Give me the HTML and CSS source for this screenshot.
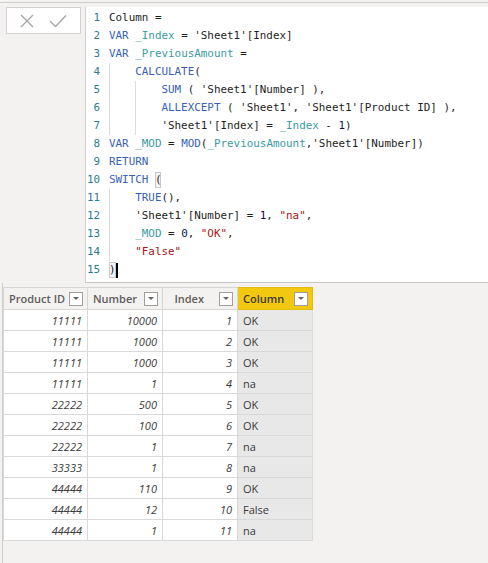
FILE: index.html
```html
<!DOCTYPE html>
<html>
<head>
<meta charset="utf-8">
<link rel="stylesheet" href="styles.css">
</head>
<body>
<div class="app">
  <div class="formula-bar">
    <div class="actions">
      <svg class="icon" width="14" height="14" viewBox="0 0 14 14"><path d="M1 1 L13 13 M13 1 L1 13" stroke="#a6a4a2" stroke-width="1.3" fill="none"/></svg>
      <svg class="icon" width="18" height="14" viewBox="0 0 18 14"><path d="M1 7 L6.5 12.5 L17 1.5" stroke="#a6a4a2" stroke-width="1.3" fill="none"/></svg>
    </div>
    <div class="editor">
      <div class="line"><span class="ln">1</span><span class="code">Column =</span></div>
      <div class="line"><span class="ln">2</span><span class="code"><span class="kw">VAR</span> <span class="var">_Index</span> = 'Sheet1'[Index]</span></div>
      <div class="line"><span class="ln">3</span><span class="code"><span class="kw">VAR</span> <span class="var">_PreviousAmount</span> =</span></div>
      <div class="line"><span class="ln">4</span><span class="code"><span class="ind"></span><span class="kw">CALCULATE</span>(</span></div>
      <div class="line"><span class="ln">5</span><span class="code"><span class="ind"></span><span class="ind"></span><span class="kw">SUM</span> ( 'Sheet1'[Number] ),</span></div>
      <div class="line"><span class="ln">6</span><span class="code"><span class="ind"></span><span class="ind"></span><span class="kw">ALLEXCEPT</span> ( 'Sheet1', 'Sheet1'[Product ID] ),</span></div>
      <div class="line"><span class="ln">7</span><span class="code"><span class="ind"></span><span class="ind"></span>'Sheet1'[Index] = <span class="var">_Index</span> - <span class="num">1</span>)</span></div>
      <div class="line"><span class="ln">8</span><span class="code"><span class="kw">VAR</span> <span class="var">_MOD</span> = <span class="kw">MOD</span>(<span class="var">_PreviousAmount</span>,'Sheet1'[Number])</span></div>
      <div class="line"><span class="ln">9</span><span class="code"><span class="kw">RETURN</span></span></div>
      <div class="line"><span class="ln">10</span><span class="code"><span class="kw">SWITCH</span> <span class="match">(</span></span></div>
      <div class="line"><span class="ln">11</span><span class="code"><span class="ind"></span><span class="kw">TRUE</span>(),</span></div>
      <div class="line"><span class="ln">12</span><span class="code"><span class="ind"></span>'Sheet1'[Number] = <span class="num">1</span>, <span class="str">"na"</span>,</span></div>
      <div class="line"><span class="ln">13</span><span class="code"><span class="ind"></span><span class="var">_MOD</span> = <span class="num">0</span>, <span class="str">"OK"</span>,</span></div>
      <div class="line"><span class="ln">14</span><span class="code"><span class="ind"></span><span class="str">"False"</span></span></div>
      <div class="line"><span class="ln">15</span><span class="code"><span class="match">)</span><span class="cursor"></span></span></div>
    </div>
  </div>
  <div class="data-area">
    <table class="grid">
      <thead>
        <tr>
          <th class="c1"><div class="th"><span>Product ID</span><span class="dd"></span></div></th>
          <th class="c2"><div class="th"><span>Number</span><span class="dd"></span></div></th>
          <th class="c3"><div class="th th-right"><span>Index</span><span class="dd"></span></div></th>
          <th class="c4 sel"><div class="th"><span>Column</span><span class="dd"></span></div></th>
        </tr>
      </thead>
      <tbody>
        <tr><td class="n">11111</td><td class="n">10000</td><td class="n">1</td><td class="t">OK</td></tr>
        <tr><td class="n">11111</td><td class="n">1000</td><td class="n">2</td><td class="t">OK</td></tr>
        <tr><td class="n">11111</td><td class="n">1000</td><td class="n">3</td><td class="t">OK</td></tr>
        <tr><td class="n">11111</td><td class="n">1</td><td class="n">4</td><td class="t">na</td></tr>
        <tr><td class="n">22222</td><td class="n">500</td><td class="n">5</td><td class="t">OK</td></tr>
        <tr><td class="n">22222</td><td class="n">100</td><td class="n">6</td><td class="t">OK</td></tr>
        <tr><td class="n">22222</td><td class="n">1</td><td class="n">7</td><td class="t">na</td></tr>
        <tr><td class="n">33333</td><td class="n">1</td><td class="n">8</td><td class="t">na</td></tr>
        <tr><td class="n">44444</td><td class="n">110</td><td class="n">9</td><td class="t">OK</td></tr>
        <tr><td class="n">44444</td><td class="n">12</td><td class="n">10</td><td class="t">False</td></tr>
        <tr><td class="n">44444</td><td class="n">1</td><td class="n">11</td><td class="t">na</td></tr>
      </tbody>
    </table>
  </div>
</div>
</body>
</html>
```
FILE: styles.css
```css
* { box-sizing: border-box; }
html, body { margin: 0; padding: 0; }
body {
  width: 488px;
  height: 563px;
  overflow: hidden;
  background: #f3f2f1;
  font-family: "Open Sans", "Noto Sans", sans-serif;
}
.app {
  height: 563px;
  display: flex;
  flex-direction: column;
  border-top: 2px solid #f3f2f1;
}
.formula-bar {
  display: flex;
  align-items: flex-start;
  border-top: 1px solid #cfcdcb;
  padding: 4px 0 0 6px;
  gap: 4px;
  background: #f3f2f1;
}
.actions {
  width: 75px;
  height: 27px;
  background: #fff;
  border: 1px solid #d2d0ce;
  display: flex;
  align-items: center;
  padding-left: 13px;
  gap: 15px;
}
.icon { display: block; }
.editor {
  flex: 1;
  height: 276px;
  background: #fff;
  border-left: 1px solid #d2d0ce;
  border-bottom: 1px solid #c8c6c4;
  padding-top: 2px;
  font-family: "DejaVu Sans Mono", monospace;
  font-size: 10.9px;
  color: #1e1e1e;
}
.line {
  display: flex;
  height: 18px;
  line-height: 18px;
  white-space: pre;
}
.ln {
  width: 14px;
  text-align: right;
  color: #2b7c8f;
  margin-right: 9px;
  flex: none;
}
.code { display: block; white-space: pre; }
.ind {
  display: inline-block;
  vertical-align: top;
  width: 4ch;
  height: 18px;
  box-shadow: inset 1px 0 0 #dcdcdc;
}
.kw { color: #3861b8; }
.var { color: #3b9aa3; }
.str { color: #a31515; }
.num { color: #09134a; }
.match {
  display: inline-block;
  vertical-align: top;
  margin-top: 1px;
  height: 16px;
  line-height: 16px;
  outline: 1px solid #c9c9c9;
  outline-offset: -1px;
  background: #f4f4f4;
}
.cursor {
  display: inline-block;
  vertical-align: top;
  margin-top: 2px;
  width: 2px;
  height: 15px;
  background: #000;
}
.data-area {
  flex: 1;
  padding: 4px 0 0 0;
  border-left: 1px solid #d0cecc;
  margin-left: 2px;
}
.grid {
  border-collapse: collapse;
  font-size: 11px;
  table-layout: fixed;
  width: 309px;
}
.c1 { width: 84px; }
.c2, .c3, .c4 { width: 75px; }
.grid th {
  height: 22px;
  padding: 0 4px 0 5px;
  border: 1px solid #d6d6d6;
  background: #f3f2f1;
  color: #605e5c;
  font-weight: 600;
  text-align: left;
  white-space: nowrap;
}
.grid th.sel { background: #f2c811; color: #3a3a3a; border-color: #e5bd12; }
.th { display: flex; align-items: center; justify-content: space-between; }
.th-right span:first-child { margin-left: auto; margin-right: 15px; }
.dd {
  width: 14px;
  height: 14px;
  background: #fff;
  border: 1px solid #a19f9d;
  position: relative;
  flex: none;
}
.dd::after {
  content: "";
  position: absolute;
  left: 3px;
  top: 4px;
  border-left: 3.5px solid transparent;
  border-right: 3.5px solid transparent;
  border-top: 3.5px solid #666;
}
.grid td {
  height: 21px;
  padding: 0 5px;
  border: 1px solid #d9d9d9;
  background: #fff;
  color: #3b3a39;
  white-space: nowrap;
}
.grid td.n { text-align: right; font-style: italic; }
.grid td.t { background: #e8e8e8; text-align: left; }
```
